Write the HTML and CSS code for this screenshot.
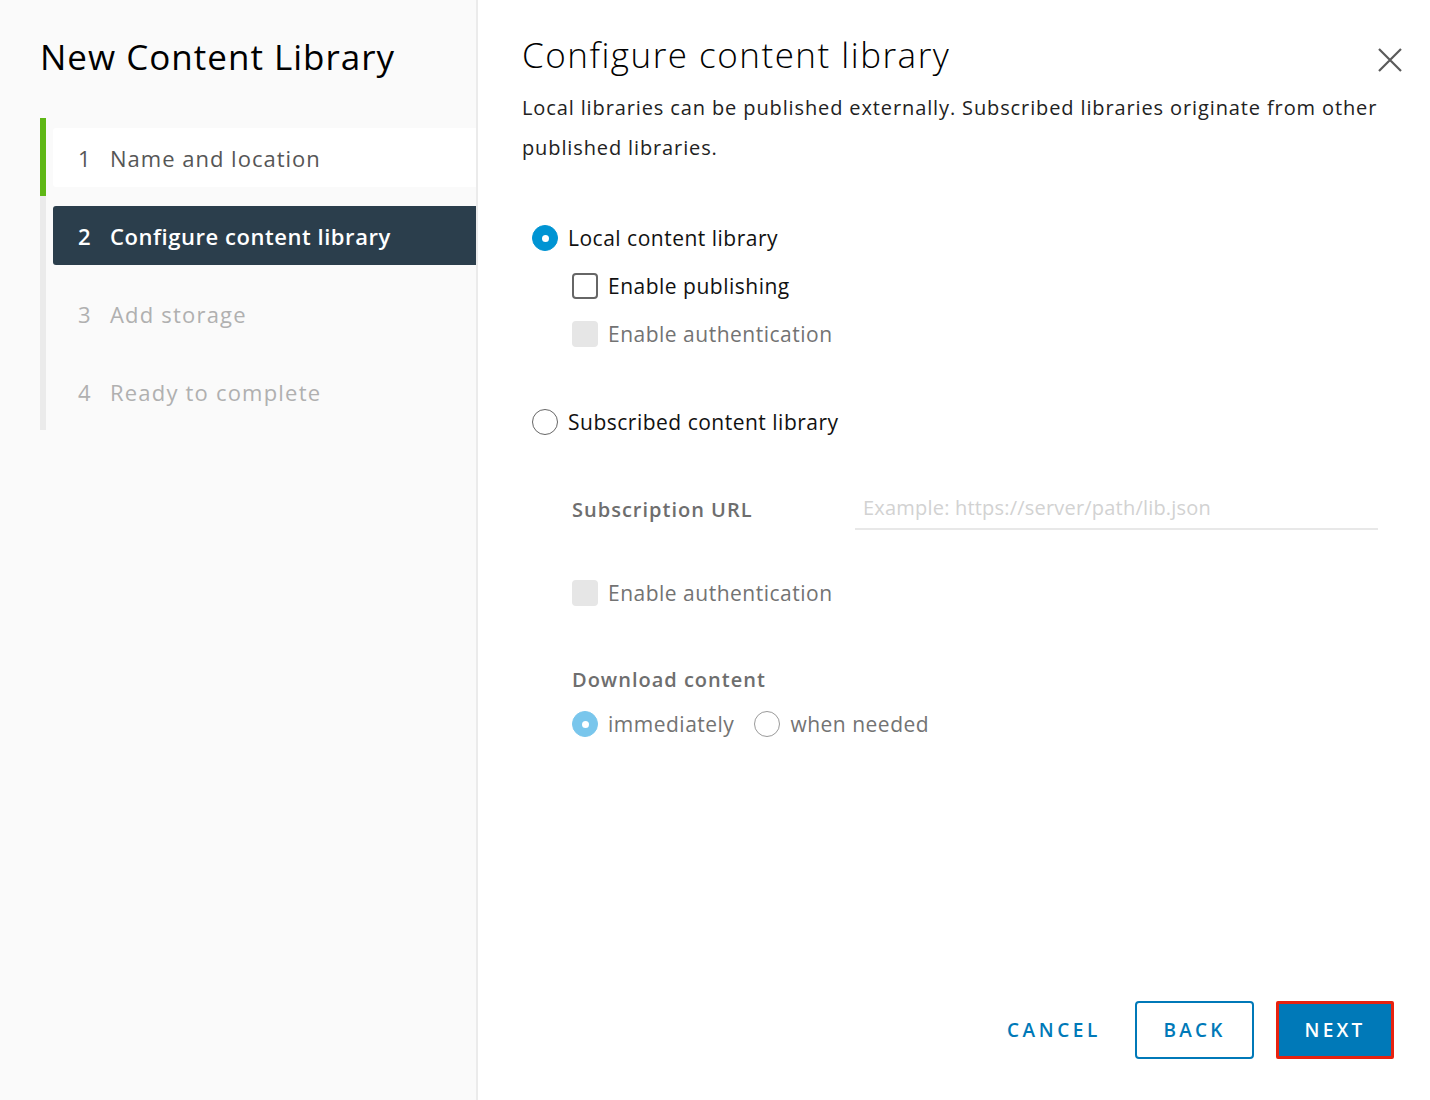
FILE: index.html
```html
<!DOCTYPE html>
<html>
<head>
<meta charset="utf-8">
<link rel="stylesheet" href="styles.css">
</head>
<body>
<div class="modal">
  <aside class="sidebar">
    <h1 class="side-title">New Content Library</h1>
    <ol class="steps">
      <li class="step done"><div class="step-box"><span class="num">1</span><span>Name and location</span></div></li>
      <li class="step current"><div class="step-box"><span class="num">2</span><span>Configure content library</span></div></li>
      <li class="step todo"><div class="step-box"><span class="num">3</span><span>Add storage</span></div></li>
      <li class="step todo"><div class="step-box"><span class="num">4</span><span>Ready to complete</span></div></li>
    </ol>
  </aside>
  <main class="content">
    <div class="head">
      <h2 class="title">Configure content library</h2>
      <svg class="close" width="24" height="24" viewBox="0 0 24 24"><path d="M1 1 L23 23 M23 1 L1 23" stroke="#5a5a5a" stroke-width="2.2" fill="none"/></svg>
    </div>
    <p class="desc">Local libraries can be published externally. Subscribed libraries originate from other published libraries.</p>

    <div class="form">
      <div class="row radio-row">
        <span class="radio checked"></span><span class="lbl">Local content library</span>
      </div>
      <div class="sub">
        <div class="row cb-row">
          <span class="cb"></span><span class="lbl">Enable publishing</span>
        </div>
        <div class="row cb-row">
          <span class="cb disabled"></span><span class="lbl muted">Enable authentication</span>
        </div>
      </div>
      <div class="row radio-row second">
        <span class="radio"></span><span class="lbl">Subscribed content library</span>
      </div>
      <div class="sub sub2">
        <div class="url-row">
          <span class="field-lbl">Subscription URL</span>
          <div class="input"><span class="ph">Example: https://server/path/lib.json</span></div>
        </div>
        <div class="row cb-row auth2">
          <span class="cb disabled"></span><span class="lbl muted">Enable authentication</span>
        </div>
        <div class="field-lbl dl">Download content</div>
        <div class="row dl-row">
          <span class="radio light"></span><span class="lbl muted">immediately</span>
          <span class="radio grey"></span><span class="lbl muted">when needed</span>
        </div>
      </div>
    </div>

    <div class="footer">
      <button class="btn link">CANCEL</button>
      <button class="btn outline">BACK</button>
      <button class="btn primary">NEXT</button>
    </div>
  </main>
</div>
</body>
</html>
```
FILE: styles.css
```css
* { box-sizing: border-box; }
html, body { margin: 0; padding: 0; }
body {
  width: 1430px;
  height: 1100px;
  font-family: "Open Sans", "Lato", sans-serif;
  color: #000;
  background: #fff;
  overflow: hidden;
}
.modal { display: flex; height: 1100px; }
.sidebar {
  width: 478px;
  flex: none;
  background: #fafafa;
  border-right: 2px solid #ebebeb;
  padding: 34px 0 0 40px;
}
.side-title {
  margin: 0;
  font-size: 35px;
  font-weight: 400;
  line-height: 46px;
  letter-spacing: 1px;
  color: #000;
}
.steps {
  list-style: none;
  margin: 38px 0 0 0;
  padding: 0;
}
.step {
  height: 78px;
  border-left: 6px solid #ebebeb;
  padding: 10px 0 9px 7px;
}
.step.done { border-left-color: #5eb715; }
.step-box {
  height: 59px;
  display: flex;
  align-items: center;
  padding-left: 25px;
  border-radius: 3px 0 0 3px;
  font-size: 22px;
  letter-spacing: 1px;
  color: #565656;
}
.step .num { width: 32px; }
.step.done .step-box { background: #fff; }
.step.current .step-box { background: #2b3e4c; color: #fff; font-weight: 600; letter-spacing: 0.55px; }
.step.todo .step-box { color: #b0b0b0; letter-spacing: 1.2px; }

.content {
  flex: 1;
  position: relative;
  padding: 30px 28px 0 44px;
}
.head { display: flex; justify-content: space-between; align-items: flex-start; }
.title {
  margin: 0;
  font-size: 35px;
  font-weight: 300;
  line-height: 50px;
  letter-spacing: 1.5px;
  color: #000;
}
.close { margin-top: 18px; }
.desc {
  margin: 8px 0 0 0;
  font-size: 20px;
  line-height: 40px;
  letter-spacing: 0.88px;
  color: #222;
  max-width: 870px;
}
.form { margin-top: 46px; padding-left: 10px; }
.row { display: flex; align-items: center; }
.lbl { font-size: 21px; color: #111; letter-spacing: 0.5px; }
.lbl.muted { color: #737373; }
.radio {
  width: 26px; height: 26px; border-radius: 50%;
  border: 1.5px solid #666;
  margin-right: 10px;
  flex: none;
  position: relative;
  background: #fff;
}
.radio.checked { background: #0094d3; border-color: #0094d3; }
.radio.checked::after, .radio.light::after {
  content: ""; position: absolute; left: 50%; top: 50%;
  width: 7px; height: 7px; margin: -3.5px 0 0 -3.5px;
  border-radius: 50%; background: #fff;
}
.radio.light { background: #79c6ec; border-color: #79c6ec; }
.radio.grey { border-color: #9a9a9a; margin-left: 20px; }
.radio-row { height: 48px; }
.sub { padding-left: 40px; }
.cb-row { height: 48px; }
.cb {
  width: 26px; height: 26px; border: 2px solid #666; border-radius: 4px;
  margin-right: 10px; flex: none; background: #fff;
}
.cb.disabled { background: #e6e6e6; border-color: #e6e6e6; }
.second { margin-top: 40px; }
.sub2 { margin-top: 44px; }
.url-row { display: flex; align-items: center; height: 40px; }
.field-lbl { font-size: 20px; font-weight: 600; color: #6e6e6e; line-height: 28px; letter-spacing: 1px; }
.url-row .field-lbl { width: 283px; }
.input {
  width: 523px;
  height: 40px;
  border-bottom: 2px solid #e8e8e8;
  padding: 4px 0 0 8px;
}
.ph { font-size: 20px; color: #d2d2d2; letter-spacing: 0.2px; }
.auth2 { margin-top: 39px; }
.dl { margin-top: 49px; }
.dl-row { margin-top: 13px; height: 34px; }

.footer {
  position: absolute;
  right: 36px;
  bottom: 41px;
  display: flex;
  align-items: center;
  gap: 22px;
}
.btn {
  font-family: inherit;
  font-size: 19px;
  font-weight: 600;
  letter-spacing: 3.2px;
  height: 58px;
  border-radius: 4px;
  cursor: pointer;
}
.btn.link { background: none; border: none; color: #0079b8; padding: 0 10px; margin-right: 2px; letter-spacing: 3.6px; }
.btn.outline { background: #fff; border: 2px solid #0079b8; color: #0079b8; width: 119px; }
.btn.primary { background: #0079b8; border: 3px solid #e8220f; color: #fff; width: 118px; border-radius: 2px; }
```
